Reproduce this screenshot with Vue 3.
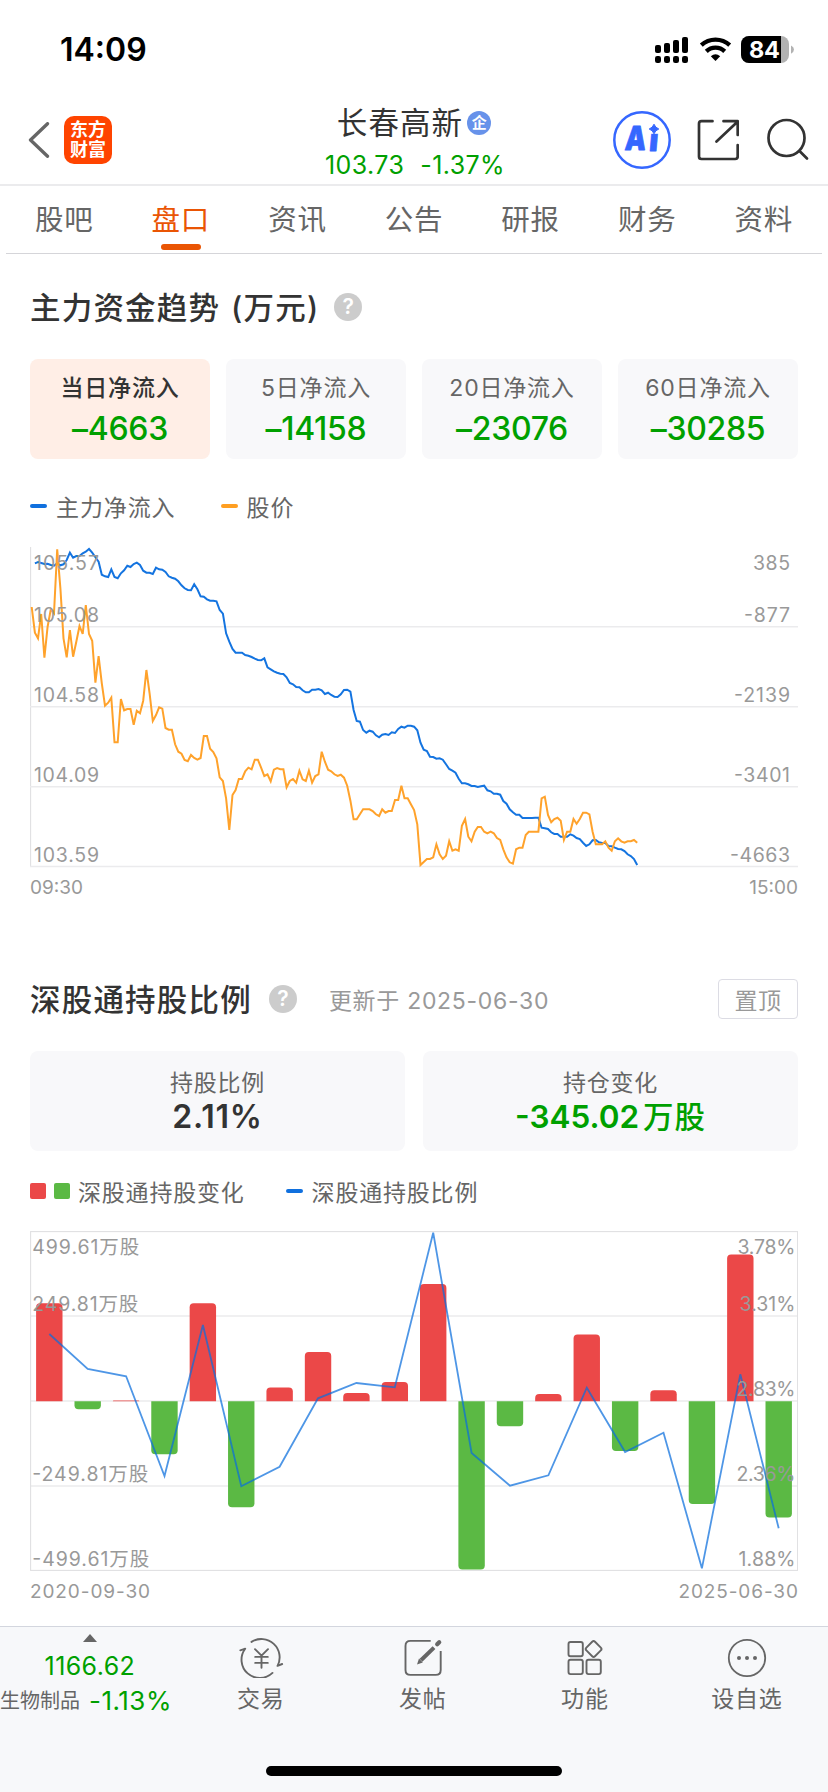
<script setup>
const tabs = ['股吧', '盘口', '资讯', '公告', '研报', '财务', '资料']

const flows = [
  { label: '当日净流入', value: '–4663', active: true },
  { label: '5日净流入', value: '–14158' },
  { label: '20日净流入', value: '–23076' },
  { label: '60日净流入', value: '–30285' },
]

// Minute samples, in thirds of a pixel below the top of the plot area
const price = [
  231, 308, 325, 252, 383, 290, 238, 250, 58, 175, 325, 382, 300, 380, 335, 288, 312, 225, 312, 332,
  458, 378, 460, 527, 518, 503, 637, 637, 507, 541, 537, 537, 584, 542, 550, 512, 420, 490, 573, 555,
  532, 536, 594, 599, 599, 643, 665, 671, 690, 694, 675, 684, 689, 684, 618, 618, 656, 666, 685, 742,
  753, 805, 900, 795, 780, 747, 747, 724, 713, 718, 689, 689, 713, 738, 733, 754, 719, 714, 718, 718,
  772, 753, 747, 758, 722, 748, 753, 722, 758, 738, 733, 665, 695, 719, 724, 733, 738, 734, 743, 767,
  812, 868, 868, 853, 838, 838, 838, 843, 853, 858, 838, 848, 843, 843, 810, 810, 767, 805, 805, 823,
  840, 883, 1005, 996, 987, 987, 982, 943, 973, 987, 977, 934, 962, 958, 962, 887, 867, 920, 934, 905,
  891, 891, 905, 910, 905, 910, 924, 930, 958, 982, 997, 1001, 958, 953, 953, 915, 905, 905, 905, 905,
  805, 800, 855, 877, 867, 863, 872, 930, 905, 905, 867, 881, 867, 848, 848, 853, 905, 943, 943, 943,
  934, 953, 962, 934, 925, 934, 938, 934, 934, 930, 938,
]
const inflow = [
  100, 96, 99, 102, 101, 105, 107, 100, 106, 103, 90, 68, 83, 78, 78, 70, 65, 57, 68, 82,
  95, 134, 139, 141, 118, 141, 145, 130, 121, 107, 111, 102, 98, 105, 122, 128, 128, 132, 113, 118,
  119, 126, 139, 143, 146, 154, 166, 175, 180, 181, 163, 178, 199, 200, 208, 212, 212, 214, 240, 251,
  310, 335, 357, 368, 368, 368, 375, 377, 381, 386, 390, 391, 385, 412, 418, 424, 428, 431, 432, 442,
  459, 463, 471, 472, 481, 487, 487, 479, 479, 477, 481, 492, 488, 495, 500, 501, 493, 480, 479, 485,
  540, 573, 575, 600, 608, 602, 605, 616, 622, 614, 612, 615, 607, 609, 597, 590, 593, 587, 587, 590,
  601, 638, 659, 663, 680, 681, 686, 685, 689, 703, 717, 722, 728, 746, 760, 760, 763, 768, 768, 771,
  769, 767, 781, 784, 791, 791, 794, 813, 821, 838, 847, 854, 854, 864, 864, 864, 864, 863, 863, 893,
  895, 897, 907, 912, 912, 920, 920, 920, 913, 917, 924, 927, 938, 948, 943, 931, 930, 937, 939, 939,
  948, 949, 953, 957, 958, 963, 973, 978, 987, 1005,
]
const trace = (values, first) =>
  values.map((v, i) => `${(1.67 + (i + first) * 3.187).toFixed(1)},${(v / 3 - 10).toFixed(1)}`).join(' ')
const pricePoints = trace(price, 0)
const inflowPoints = trace(inflow, 1)

const trendLabels = [
  { y: 30, left: '105.57', right: '385', rw: 37 },
  { y: 82, left: '105.08', right: '-877', rw: 46 },
  { y: 162, left: '104.58', right: '-2139', rw: 56 },
  { y: 242, left: '104.09', right: '-3401', rw: 56 },
  { y: 322, left: '103.59', right: '-4663', rw: 60 },
]

// Quarterly bars: positive values rise above the zero line
const changes = [98, -8, 0.7, -53, 98, -106, 13.7, 49.3, 8.3, 19.3, 117.3, -168.3, -25, 7.3, 66.7, -49.7, 11, -102.7, 146.7, -116.3]
const ratios = [372, 477, 499, 798, 345, 829, 770, 565, 519, 532, 68, 729, 827, 796, 533, 726, 668, 1075, 493, 955]
const barX = (i) => 19.3 + i * 38.39
const ZERO = 171.3
const barPath = (v, i) => {
  const l = barX(i) - 13.2
  const r = l + 26.4
  const end = ZERO - v
  const rad = Math.min(4, Math.abs(v))
  const s = v > 0 ? rad : -rad
  return `M${l} ${ZERO}V${end + s}Q${l} ${end} ${l + rad} ${end}H${r - rad}Q${r} ${end} ${r} ${end + s}V${ZERO}Z`
}
const ratioPoints = ratios.map((v, i) => `${barX(i).toFixed(1)},${(v / 3 - 20).toFixed(1)}`).join(' ')
const holdLabels = [
  { y: 24, left: '499.61万股', lw: 107, right: '3.78%', rw: 58 },
  { y: 81, left: '249.81万股', lw: 106, right: '3.31%', rw: 56 },
  { y: 166, left: '', lw: 0, right: '2.83%', rw: 59 },
  { y: 251, left: '-249.81万股', lw: 116, right: '2.36%', rw: 59 },
  { y: 336, left: '-499.61万股', lw: 117, right: '1.88%', rw: 57 },
]
</script>

<template>
  <div class="screen">
    <div class="status">
      <span class="time">14:09</span>
      <svg class="indicators" width="142" height="30" viewBox="0 0 142 30">
        <g v-for="(h, i) in [8, 10, 13, 16]" :key="i">
          <rect :x="1 + i * 9" :y="18 - h" width="6" :height="h" rx="2" />
          <rect :x="1 + i * 9" y="21" width="6" height="7" rx="2.2" />
        </g>
        <g fill="none" stroke="#000" stroke-width="4.3">
          <path d="M47.3 10.2A21 21 0 0 1 75.7 10.2" />
          <path d="M52.3 16.4A13.2 13.2 0 0 1 70.7 16.4" />
        </g>
        <path d="M61.5 26L56.8 21.2Q61.5 17.4 66.2 21.2Z" />
        <rect x="87" y="1" width="48" height="27" rx="8" fill="#b2b2b2" />
        <path d="M95 1H127V28H95A8 8 0 0 1 87 20V9A8 8 0 0 1 95 1Z" />
        <path d="M137 10.5Q140 12 140 14.5T137 18.8Z" fill="#b2b2b2" />
        <text x="95" y="23" textLength="31" class="battery">84</text>
      </svg>
    </div>

    <header class="header">
      <div class="brand">
        <svg width="22" height="36" viewBox="0 0 22 36" fill="none" stroke="#666" stroke-width="3.3">
          <path d="M19.5 1.7L2.5 18L19.5 34.3" stroke-linecap="round" stroke-linejoin="round" />
        </svg>
        <div class="logo"><span>东方</span><span>财富</span></div>
      </div>
      <div class="stock">
        <div class="name">
          <span>长春高新</span><i class="corp">企</i>
        </div>
        <div class="quote"><span>103.73</span><span>-1.37%</span></div>
      </div>
      <div class="actions">
        <svg width="60" height="60" viewBox="0 0 60 60">
          <g class="ai" transform="translate(3.2 0) skewX(-5)">
            <text x="12.5" y="40.3" textLength="21" lengthAdjust="spacingAndGlyphs">A</text>
            <text x="37" y="41.5" textLength="9" lengthAdjust="spacingAndGlyphs">i</text>
          </g>
          <rect x="34.5" y="11" width="14" height="12.8" fill="#fff" />
          <path d="M42 14.2Q43.3 17.7 46.8 19Q43.3 20.3 42 23.8Q40.7 20.3 37.2 19Q40.7 17.7 42 14.2Z" fill="#3567ff" stroke="#3567ff" stroke-width="1" />
          <circle cx="30" cy="30" r="27.7" fill="none" stroke="#3567ff" stroke-width="2.5" />
        </svg>
        <svg width="42" height="42" viewBox="0 0 42 42" fill="none" stroke="#333" stroke-width="2.7" stroke-linecap="round" stroke-linejoin="round">
          <path d="M15.5 2.2H4.5Q2 2.2 2 4.7V37.5Q2 40 4.5 40H38.2Q40.7 40 40.7 37.5V26" />
          <path d="M26.5 2.2H40.7V16M40.2 3L19.5 22.5" />
        </svg>
        <svg width="44" height="44" viewBox="0 0 44 44" fill="none" stroke="#333" stroke-width="2.7" stroke-linecap="round">
          <circle cx="20.5" cy="20" r="18" />
          <path d="M33.5 33L41 40.5" />
        </svg>
      </div>
    </header>

    <nav class="tabs">
      <div v-for="(t, i) in tabs" :key="t" class="tab" :class="{ active: i === 1 }"><span>{{ t }}</span></div>
    </nav>

    <section class="trend">
      <div class="heading">
        <h2>主力资金趋势 <span class="unit">(万元)</span></h2><i class="help">?</i>
      </div>
      <div class="cards">
        <div v-for="f in flows" :key="f.label" class="card" :class="{ active: f.active }">
          <span class="label">{{ f.label }}</span>
          <span class="value down">{{ f.value }}</span>
        </div>
      </div>
      <div class="legend">
        <i class="dash"></i><span>主力净流入</span>
        <i class="dash orange"></i><span>股价</span>
      </div>
      <svg class="chart" width="768" height="330" viewBox="0 0 768 330">
        <g stroke="#ebebed" stroke-width="1.4">
          <path d="M.6 7V327" stroke="#e0e0e2" stroke-width="1.1" />
          <path d="M0 86.8H768M0 166.8H768M0 246.8H768M0 326.5H768" />
        </g>
        <polyline :points="inflowPoints" class="line blue" />
        <polyline :points="pricePoints" class="line amber" />
        <g v-for="l in trendLabels" :key="l.y" class="axis">
          <text x="4" :y="l.y" textLength="65">{{ l.left }}</text>
          <text :x="760 - l.rw" :y="l.y" :textLength="l.rw">{{ l.right }}</text>
        </g>
      </svg>
      <div class="dates"><span>09:30</span><span>15:00</span></div>
    </section>

    <section class="holding">
      <div class="heading">
        <h2>深股通持股比例</h2><i class="help">?</i>
        <span class="updated">更新于 <b>2025-06-30</b></span>
        <button class="pin">置顶</button>
      </div>
      <div class="cards two">
        <div class="card">
          <span class="label">持股比例</span><span class="value ratio-value">2.11%</span>
        </div>
        <div class="card">
          <span class="label">持仓变化</span><span class="value down">-345.02<em>万股</em></span>
        </div>
      </div>
      <div class="legend">
        <i class="box"></i><i class="box green"></i><span>深股通持股变化</span>
        <i class="dash"></i><span>深股通持股比例</span>
      </div>
      <svg class="chart" width="768" height="342" viewBox="0 0 768 342">
        <g fill="none" stroke="#ebebed" stroke-width="1.4">
          <path d="M0 86H768M0 171H768M0 256H768" />
          <rect x=".6" y="1.6" width="767" height="338.8" stroke="#e0e0e2" stroke-width="1.1" />
        </g>
        <path v-for="(v, i) in changes" :key="i" :d="barPath(v, i)" :fill="v > 0 ? '#eb4848' : '#5bb944'" />
        <polyline :points="ratioPoints" class="line ratio" />
        <g v-for="l in holdLabels" :key="l.y" class="axis">
          <text v-if="l.left" x="2.3" :y="l.y" :textLength="l.lw">{{ l.left }}</text>
          <text :x="767 - l.rw - 1.5" :y="l.y" :textLength="l.rw">{{ l.right }}</text>
        </g>
      </svg>
      <div class="dates wide"><span>2020-09-30</span><span>2025-06-30</span></div>
    </section>

    <footer class="footer">
      <div class="bar">
        <div class="index">
          <i class="up"></i>
          <span class="points">1166.62</span>
          <div class="sector"><span>生物制品</span><b>-1.13%</b></div>
        </div>
        <div class="item">
          <svg width="46" height="42" viewBox="0 0 46 42" fill="none" stroke="#666" stroke-width="1.9" stroke-linecap="round" stroke-linejoin="round">
            <path d="M13.5 5.9A18.3 18.3 0 0 1 39.5 29.9L44.2 28" />
            <path d="M34.5 36.9A18.3 18.3 0 0 1 7.2 12.7L2.3 14.3" />
            <path d="M17 13.2L23.5 19.7L30 13.2M17.2 20.9H29.8M17.2 26.9H29.8M23.5 19.7V31.7" />
          </svg>
          <span>交易</span>
        </div>
        <div class="item">
          <svg width="42" height="42" viewBox="0 0 42 42" fill="none" stroke="#666" stroke-width="1.9">
            <path d="M28.7 4.9H8.5Q3.5 4.9 3.5 9.9V33.9Q3.5 38.9 8.5 38.9H33.7Q38.7 38.9 38.7 33.9V14.9" />
            <path d="M19 24.2L32 11.6" stroke-width="4" />
            <path d="M17 22.6L20.8 26.4L15 28.6Z" fill="#666" stroke="none" />
            <path d="M35.2 8.2L37.2 6.2" stroke-width="4.2" stroke-linecap="round" />
          </svg>
          <span>发帖</span>
        </div>
        <div class="item">
          <svg width="42" height="42" viewBox="0 0 42 42" fill="none" stroke="#666" stroke-width="1.9">
            <rect x="4.5" y="6" width="14.3" height="14.3" rx="2" />
            <rect x="4.5" y="23.8" width="14.3" height="14.3" rx="2" />
            <rect x="22.5" y="23.8" width="14.3" height="14.3" rx="2" />
            <rect x="23.5" y="6.9" width="12.2" height="12.2" rx="2" transform="rotate(45 29.6 13)" />
          </svg>
          <span>功能</span>
        </div>
        <div class="item">
          <svg width="42" height="42" viewBox="0 0 42 42">
            <circle cx="21" cy="22" r="18.2" fill="none" stroke="#666" stroke-width="1.8" />
            <g fill="#666"><circle cx="13" cy="22" r="2" /><circle cx="21" cy="22" r="2" /><circle cx="29" cy="22" r="2" /></g>
          </svg>
          <span>设自选</span>
        </div>
      </div>
      <div class="home"></div>
    </footer>
  </div>
</template>

<style>
body {
  background: #fff;
}
</style>

<style scoped>
.screen {
  width: 828px;
  height: 1792px;
  display: flex;
  flex-direction: column;
  background: #fff;
  font-family: Inter, 'Noto Sans CJK SC', sans-serif;
  color: #333;
  overflow: hidden;
}
.screen * {
  box-sizing: border-box;
}
i,
em,
b {
  font-style: normal;
  font-weight: inherit;
}
.status {
  height: 96px;
  flex: none;
  display: flex;
  justify-content: space-between;
  align-items: flex-start;
  padding: 30px 32px 0 60px;
}
.time {
  font-size: 32px;
  line-height: 40px;
  font-weight: 600;
  color: #000;
}
.indicators {
  margin-top: 5px;
}
.battery {
  font-size: 23.5px;
  font-weight: 700;
  fill: #fff;
}
.header {
  height: 90px;
  flex: none;
  display: grid;
  grid-template-columns: 1fr auto 1fr;
  border-bottom: 2px solid #ebebed;
}
.brand {
  display: flex;
  align-items: flex-start;
  padding: 20px 0 0 28px;
}
.brand svg {
  margin-top: 6px;
}
.logo {
  width: 48px;
  height: 48px;
  margin-left: 14px;
  border-radius: 10px;
  background: #ff4400;
  color: #fff;
  display: flex;
  flex-direction: column;
  align-items: center;
  padding-top: 4px;
  font-size: 18px;
  line-height: 19.5px;
  font-weight: 700;
}
.stock {
  display: flex;
  flex-direction: column;
  align-items: center;
}
.name {
  display: flex;
  align-items: center;
  height: 54px;
  margin-top: -2px;
  font-size: 30.5px;
  letter-spacing: 1.1px;
}
.corp {
  width: 24px;
  height: 24px;
  margin: 3px 0 0 4px;
  border-radius: 50%;
  background: #6792ea;
  color: #fff;
  font-size: 15px;
  line-height: 24px;
  text-align: center;
  letter-spacing: 0;
  font-weight: 700;
}
.quote {
  display: flex;
  gap: 16px;
  margin: 1px 0 0 2px;
  font-size: 25px;
  line-height: 32px;
  letter-spacing: 0.4px;
  color: #00a000;
}
.actions {
  display: flex;
  align-items: flex-start;
  justify-content: flex-end;
  padding: 14px 18px 0 0;
}
.actions svg:nth-child(2) {
  margin: 9px 27px 0 25px;
}
.actions svg:nth-child(3) {
  margin-top: 8px;
}
.ai {
  font-size: 33px;
  font-weight: 900;
  fill: #3567ff;
  stroke: #3567ff;
  stroke-width: 0.8;
  stroke-linejoin: round;
}
.tabs {
  height: 68px;
  flex: none;
  margin: 0 6px;
  display: flex;
  border-bottom: 1px solid #d5d5d9;
}
.tab {
  flex: 1;
  display: flex;
  flex-direction: column;
  align-items: center;
  font-size: 28.5px;
  line-height: 68px;
  height: 67px;
  letter-spacing: 0.8px;
  color: #666;
}
.tab.active {
  color: #ea5504;
}
.tab.active::after {
  content: '';
  width: 40px;
  height: 6px;
  flex: none;
  margin-top: -10px;
  border-radius: 3px;
  background: #ea5504;
}
.trend,
.holding {
  padding: 0 30px;
}
.trend {
  height: 697px;
  flex: none;
}
.heading {
  height: 105px;
  display: flex;
  align-items: center;
}
h2 {
  margin: 2px 0 0;
  font-size: 30.5px;
  line-height: 40px;
  font-weight: 500;
  letter-spacing: 1.2px;
  white-space: nowrap;
}
.unit {
  margin-left: 1.5px;
}
.help {
  width: 28px;
  height: 28px;
  margin-left: 17px;
  border-radius: 50%;
  background: #ccc;
  color: #fff;
  font-size: 21px;
  line-height: 28px;
  font-weight: 600;
  text-align: center;
}
.trend .help {
  margin-left: 15px;
}
.cards {
  display: grid;
  grid-template-columns: repeat(4, 1fr);
  gap: 16px;
}
.cards.two {
  grid-template-columns: 1fr 1fr;
  gap: 18px;
}
.card {
  height: 100px;
  border-radius: 8px;
  background: #f8f8fa;
  display: flex;
  flex-direction: column;
  align-items: center;
  padding-top: 12px;
}
.card.active {
  background: #ffeee6;
}
.label {
  font-size: 23px;
  line-height: 34px;
  letter-spacing: 0.8px;
  color: #666;
}
.active .label {
  color: #333;
  font-weight: 500;
}
.value {
  font-size: 32px;
  line-height: 40px;
  margin-top: 4px;
  font-weight: 500;
  letter-spacing: -0.3px;
}
.down {
  color: #00a000;
}
.two .card {
  padding-top: 15px;
}
.two .value {
  font-size: 31.5px;
  margin-top: -3px;
  font-weight: 600;
  letter-spacing: 0;
}
.two .ratio-value {
  font-size: 32px;
  letter-spacing: 0.8px;
}
.two em {
  font-size: 30.5px;
  margin-left: 4px;
  font-weight: 500;
  letter-spacing: 1px;
}
.legend {
  height: 81px;
  display: flex;
  align-items: center;
  padding-top: 12px;
  font-size: 23px;
  letter-spacing: 0.9px;
  color: #666;
}
.dash {
  width: 17px;
  height: 4px;
  border-radius: 2px;
  background: #1070de;
  margin-right: 9px;
}
.legend span + .dash {
  margin-left: 45px;
}
.dash.orange {
  background: #ff9f22;
}
.chart {
  display: block;
}
.line {
  fill: none;
  stroke-width: 2;
  stroke-linejoin: miter;
}
.blue {
  stroke: #1474e0;
}
.amber {
  stroke: #ffa22b;
}
.ratio {
  stroke: #0a6edc;
  stroke-opacity: 0.72;
  stroke-width: 1.8;
}
.axis {
  font-size: 19.5px;
  fill: #999;
}
.dates {
  display: flex;
  justify-content: space-between;
  padding-top: 4px;
  font-size: 19px;
  line-height: 28px;
  color: #999;
}
.holding .heading {
  height: 104px;
  margin-top: -4px;
}
.updated {
  margin-left: 32px;
  font-size: 23px;
  letter-spacing: 0.7px;
  color: #999;
  white-space: nowrap;
}
.pin {
  width: 80px;
  height: 40px;
  margin-left: auto;
  padding: 0;
  border: 1.5px solid #dcdce4;
  border-radius: 4px;
  background: #fff;
  font: inherit;
  font-size: 23px;
  letter-spacing: 0.6px;
  color: #999;
}
.box {
  width: 16px;
  height: 16px;
  margin-right: 8px;
  border-radius: 2px;
  background: #eb4848;
}
.box.green {
  background: #5bb944;
}
.holding .legend {
  height: 79px;
  padding-top: 1px;
  letter-spacing: 0.8px;
}
.holding .legend .dash {
  margin-left: 41px;
}
.dates.wide {
  padding-top: 6px;
  letter-spacing: 0.9px;
}
.dates.wide span:last-child {
  margin-right: -0.9px;
}
.footer {
  height: 166px;
  flex: none;
  margin-top: auto;
  border-top: 1px solid #d3d6de;
  background: #f7f8fa;
}
.bar {
  display: flex;
  height: 139px;
}
.index {
  width: 180px;
  display: flex;
  flex-direction: column;
  align-items: center;
  padding-top: 7px;
}
.up {
  border: 7px solid transparent;
  border-top: 0;
  border-bottom: 8px solid #666;
}
.points {
  margin-top: 8px;
  font-size: 25px;
  line-height: 32px;
  letter-spacing: 0.4px;
  color: #00a000;
}
.sector {
  display: flex;
  align-items: center;
  align-self: flex-start;
  margin-top: 3px;
  font-size: 20px;
  line-height: 32px;
  color: #666;
  white-space: nowrap;
}
.sector b {
  margin-left: 9px;
  font-size: 26px;
  letter-spacing: 0.5px;
  color: #00a000;
}
.item {
  width: 162.3px;
  display: flex;
  flex-direction: column;
  align-items: center;
  padding-top: 9px;
  font-size: 23px;
  line-height: 34px;
  letter-spacing: 0.8px;
  color: #666;
}
.item span {
  margin-top: 4px;
}
.home {
  width: 296px;
  height: 10px;
  margin: 0 auto;
  border-radius: 5px;
  background: #000;
}
</style>
